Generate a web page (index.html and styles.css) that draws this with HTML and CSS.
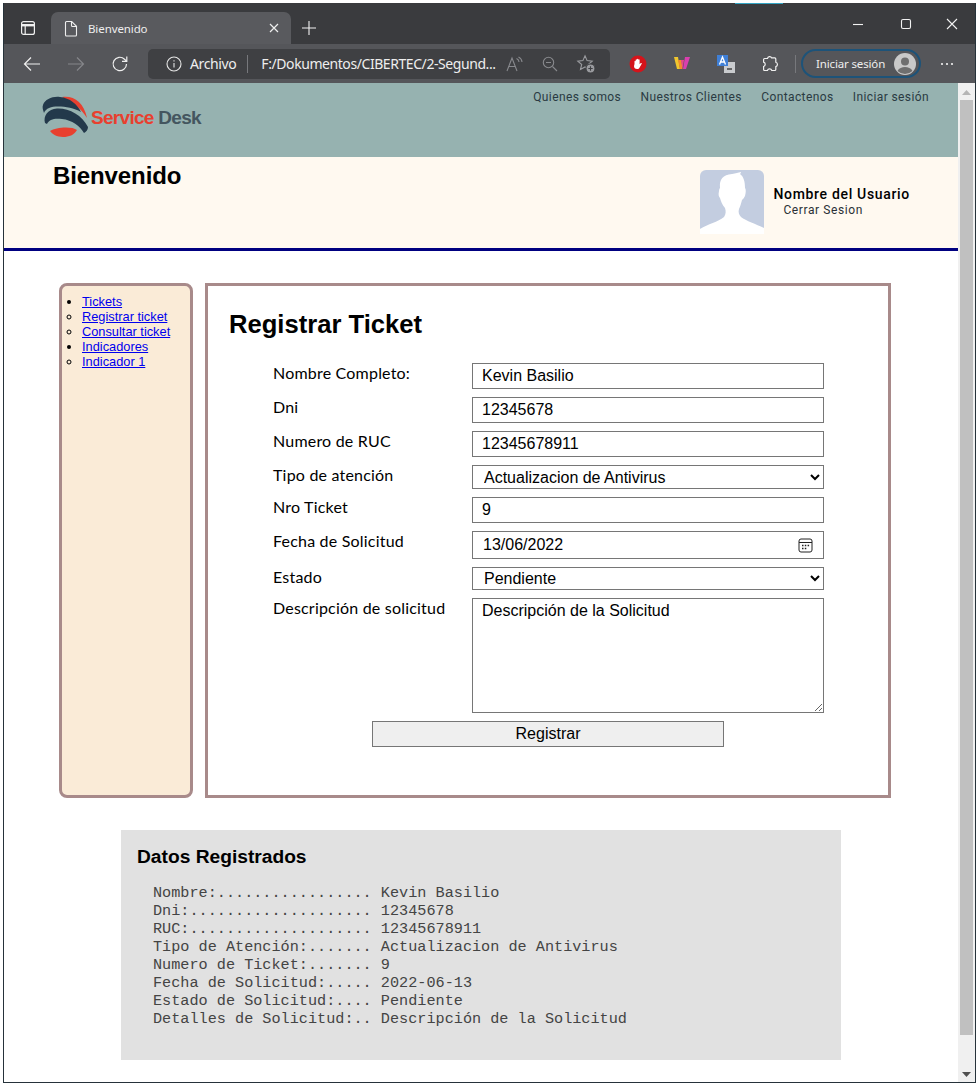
FILE: index.html
```html
<!DOCTYPE html>
<html lang="es">
<head>
<meta charset="utf-8">
<title>Bienvenido</title>
<link rel="stylesheet" href="styles.css">
</head>
<body>
<div class="window">
  <span class="accent"></span>
  <div class="titlebar">
    <span class="tb-icon">
      <svg width="16" height="16" viewBox="0 0 16 16" fill="none" stroke="#f0f0f0" stroke-width="1.2"><rect x="1.6" y="1.6" width="12.8" height="12.8" rx="2"/><path d="M1.6 5.2h12.8" stroke-width="2.4"/><path d="M5.2 5v9"/></svg>
    </span>
    <div class="tab">
      <svg class="tab-file" width="14" height="17" viewBox="0 0 14 17" fill="none" stroke="#eee" stroke-width="1.1"><path d="M1.5 2.5a1 1 0 0 1 1-1h5.2l4.8 4.8v8.7a1 1 0 0 1-1 1h-9a1 1 0 0 1-1-1z"/><path d="M7.5 1.5v4a1 1 0 0 0 1 1h4"/></svg>
      <span class="tab-title">Bienvenido</span>
      <svg class="tab-close" width="10" height="10" viewBox="0 0 10 10" stroke="#eee" stroke-width="1.2"><path d="M1 1l8 8M9 1l-8 8"/></svg>
    </div>
    <span class="tb-plus">
      <svg width="16" height="16" viewBox="0 0 16 16" stroke="#f2f2f2" stroke-width="1.1"><path d="M8 1v14M1 8h14"/></svg>
    </span>
    <div class="winctl">
      <svg width="12" height="12" viewBox="0 0 12 12" stroke="#f2f2f2" stroke-width="1.1"><path d="M1 6.5h10"/></svg>
      <svg class="winctl-max" width="12" height="12" viewBox="0 0 12 12" fill="none" stroke="#f2f2f2" stroke-width="1.1"><rect x="1.5" y="1.5" width="9" height="9" rx="1.5"/></svg>
      <svg width="12" height="12" viewBox="0 0 12 12" stroke="#f2f2f2" stroke-width="1.1"><path d="M1 1l10 10M11 1L1 11"/></svg>
    </div>
  </div>

  <div class="toolbar">
    <span class="tool"><svg width="18" height="16" viewBox="0 0 18 16" fill="none" stroke="#efefef" stroke-width="1.2"><path d="M17 8H1.5M8 1.5L1.5 8 8 14.5"/></svg></span>
    <span class="tool"><svg width="18" height="16" viewBox="0 0 18 16" fill="none" stroke="#85868a" stroke-width="1.2"><path d="M1 8h15.5M10 1.5L16.5 8 10 14.5"/></svg></span>
    <span class="tool"><svg width="18" height="18" viewBox="0 0 18 18" fill="none" stroke="#efefef" stroke-width="1.2"><path d="M15.5 9a6.7 6.7 0 1 1-2-4.8L15.6 6.200"/><path d="M15.8 1.600v4.800H11"/></svg></span>
    <div class="addr">
      <svg class="addr-info" width="16" height="16" viewBox="0 0 16 16" fill="none" stroke="#e6e6e6" stroke-width="1.100"><circle cx="8" cy="8" r="7"/><path d="M8 7v4.500M8 4.300v1.200"/></svg>
      <span class="addr-scheme">Archivo</span>
      <span class="addr-sep"></span>
      <span class="addr-url">F:/Dokumentos/CIBERTEC/2-Segund...</span>
      <svg class="addr-ico-a" width="18" height="16" viewBox="0 0 18 16" fill="none" stroke="#88898d" stroke-width="1.100"><path d="M1 15L6 2l5 13M2.800 10.500h6.500"/><path d="M10.500 2.500a4 4 0 0 1 2.500 3.500M12.500 1a6 6 0 0 1 3.500 5"/></svg>
      <svg class="addr-ico-z" width="16" height="16" viewBox="0 0 16 16" fill="none" stroke="#88898d" stroke-width="1.100"><circle cx="6.500" cy="6.500" r="5.200"/><path d="M4 6.500h5M10.500 10.500L15 15"/></svg>
      <svg class="addr-ico-f" width="20" height="20" viewBox="0 0 20 20" fill="none" stroke="#9a9b9f" stroke-width="1.100"><path d="M9 1.800l2.100 4.800 5.100.5-3.900 3.400 1.200 5-4.500-2.600-4.500 2.600 1.200-5-3.900-3.400 5.100-.5z"/><circle cx="14.500" cy="14.500" r="4.500" fill="#9a9b9f" stroke="#3f4043"/><path d="M14.500 12.300v4.400M12.300 14.500h4.400" stroke="#3f4043"/></svg>
    </div>
    <div class="exts">
      <span class="ext"><svg width="18" height="18" viewBox="0 0 18 18"><circle cx="9" cy="9" r="8.500" fill="#d4141b"/><path d="M5.500 9V6.500c0-1 1.200-1 1.200 0V5c0-1 1.300-1 1.300 0v-.5c0-1 1.300-1 1.300 0V5c0-.9 1.300-.9 1.300 0v4.300l1-1c.7-.6 1.500 0 1 .8l-2 3.400c-.6 1-1.200 1.500-2.500 1.500-2 0-3.100-1.300-3.100-3z" fill="#fff"/></svg></span>
      <span class="ext"><svg width="18" height="16" viewBox="0 0 18 16"><path d="M1 2h4l2 12H4z" fill="#f0c62e"/><path d="M5 5h3.500l1 9H7z" fill="#f28a2e"/><path d="M8 5h3l-1.500 9z" fill="#e8458c"/><path d="M12 2h5l-4 12h-3z" fill="#d93fae"/></svg></span>
      <span class="ext"><svg width="18" height="18" viewBox="0 0 18 18"><rect x="7" y="7" width="11" height="11" fill="#c9cbce"/><path d="M10 14h5" stroke="#666" stroke-width="2"/><rect x="0" y="0" width="11" height="11" fill="#3f7fd6"/><path d="M2.500 9.500L5.500 2l3 7.500M3.700 7h3.600" fill="none" stroke="#fff" stroke-width="1.300"/></svg></span>
      <span class="ext"><svg width="18" height="18" viewBox="0 0 18 18" fill="none" stroke="#f0f0f0" stroke-width="1.200"><path d="M6.500 3.500a2.200 2.200 0 0 1 4.200-.6h3.100a1 1 0 0 1 1 1v3.300a2.300 2.300 0 0 1 0 4.400v2.900a1 1 0 0 1-1 1h-3a2.300 2.300 0 0 0-4.400 0H3.600a1 1 0 0 1-1-1v-3a2.300 2.300 0 0 0 0-4.400v-2.600a1 1 0 0 1 1-1z"/></svg></span>
    </div>
    <span class="tool-sep"></span>
    <div class="signin">
      <span class="signin-text">Iniciar sesión</span>
      <svg width="22" height="22" viewBox="0 0 22 22"><circle cx="11" cy="11" r="11" fill="#c9c9c9"/><circle cx="11" cy="8.500" r="4" fill="#6f6f6f"/><path d="M3.500 18c1.500-3 4.500-4 7.500-4s6 1 7.500 4a11 11 0 0 1-15 0z" fill="#6f6f6f"/></svg>
    </div>
    <svg class="more" width="14" height="4" viewBox="0 0 14 4" fill="#f0f0f0"><circle cx="2" cy="2" r="1.100"/><circle cx="7" cy="2" r="1.100"/><circle cx="12" cy="2" r="1.100"/></svg>
  </div>

  <div class="viewport">
    <div class="page">
      <header class="site-head">
        <a class="logo">
          <svg width="46" height="42" viewBox="0 0 46 42">
            <path d="M20 1C31-1 42 6 45 22 39 12 30 6 20 1z" fill="#e8402f"/>
            <path d="M1 9C3 3 11 0 18 1 28 2 35 8 39 16 32 12 24 10.500 16 10.500 9 10.500 4 12 2 17 1 14 0 11 1 9z" fill="#23394b"/>
            <path d="M3 27C1 20 6 13 15 12.500 27 12 40 19 46 31 46 34 44 36 42 37 38 30 30 24 20 23 13 22 7 23 5 28z" fill="#23394b"/>
            <path d="M8 35C14 31 30 30 35 34 32 39 27 41 21 41 15 41 10 38 8 35z" fill="#e8402f"/>
          </svg>
          <span class="logo-text"><span class="logo-red">Service</span> <span class="logo-dark">Desk</span></span>
        </a>
        <nav class="site-nav">
          <a>Quienes somos</a>
          <a>Nuestros Clientes</a>
          <a>Contactenos</a>
          <a>Iniciar sesión</a>
        </nav>
      </header>

      <section class="welcome">
        <h2 class="welcome-title">Bienvenido</h2>
        <div class="user">
          <svg class="avatar" width="64" height="64" viewBox="0 0 64 64">
            <rect width="64" height="64" rx="6" fill="#c3cde0"/>
            <path d="M0 59C8 54 18 52 24 47 26 44 26 41 25 38 22 35 21 31 20 28 19 27 18 25 19 21 19 19 20 18 20 18 19 9 23 5 32 4 36 3 38 3 41 2 41 3 40 4 40 4 44 7 45 12 45 18 46 19 46 22 45 26 44 28 43 29 42 30 41 34 40 37 39 39 38 42 39 45 41 47 46 51 56 54 64 58V64H0z" fill="#fff"/>
          </svg>
          <div class="user-info">
            <div class="user-name">Nombre del Usuario</div>
            <div class="user-logout">Cerrar Sesion</div>
          </div>
        </div>
      </section>

      <div class="columns">
        <aside class="sidebar">
          <ul class="menu">
            <li class="disc"><a href="#">Tickets</a></li>
            <li class="circle"><a href="#">Registrar ticket</a></li>
            <li class="circle"><a href="#">Consultar ticket</a></li>
            <li class="disc"><a href="#">Indicadores</a></li>
            <li class="circle"><a href="#">Indicador 1</a></li>
          </ul>
        </aside>
        <main class="main">
          <h1 class="main-title">Registrar Ticket</h1>
          <form class="form">
            <label class="lbl">Nombre Completo:</label>
            <input class="field" type="text" value="Kevin Basilio">
            <label class="lbl">Dni</label>
            <input class="field" type="text" value="12345678">
            <label class="lbl">Numero de RUC</label>
            <input class="field" type="text" value="12345678911">
            <label class="lbl">Tipo de atención</label>
            <select class="field sel"><option>Actualizacion de Antivirus</option></select>
            <label class="lbl">Nro Ticket</label>
            <input class="field" type="text" value="9">
            <label class="lbl">Fecha de Solicitud</label>
            <div class="field date">
              <input class="date-input" type="text" value="13/06/2022">
              <svg width="15" height="15" viewBox="0 0 15 15" fill="none" stroke="#222" stroke-width="1"><rect x="1" y="1" width="13" height="13" rx="2"/><path d="M1 4.500h13"/><path d="M4 7.500h1.500M6.800 7.500h1.500M9.600 7.500h1.500M4 10.500h1.500M6.800 10.500h1.500" stroke-width="1.300"/></svg>
            </div>
            <label class="lbl">Estado</label>
            <select class="field sel sel-b"><option>Pendiente</option></select>
            <label class="lbl">Descripción de solicitud</label>
            <textarea class="field area">Descripción de la Solicitud</textarea>
            <button class="btn" type="button">Registrar</button>
          </form>
        </main>
      </div>

      <section class="data">
        <h3 class="data-title">Datos Registrados</h3>
        <pre class="data-pre">Nombre:................. Kevin Basilio
Dni:.................... 12345678
RUC:.................... 12345678911
Tipo de Atención:....... Actualizacion de Antivirus
Numero de Ticket:....... 9
Fecha de Solicitud:..... 2022-06-13
Estado de Solicitud:.... Pendiente
Detalles de Solicitud:.. Descripción de la Solicitud</pre>
      </section>
    </div>
    <div class="scrollbar">
      <svg class="sb-arrow" width="9" height="5" viewBox="0 0 9 5" fill="#b5b5b5"><path d="M4.500 0L9 5H0z"/></svg>
      <div class="sb-thumb"></div>
      <svg class="sb-arrow" width="9" height="5" viewBox="0 0 9 5" fill="#505050"><path d="M0 0h9L4.500 5z"/></svg>
    </div>
  </div>
</div>
</body>
</html>
```

FILE: styles.css
```css
* { box-sizing: border-box; }
html, body { margin: 0; padding: 0; height: 100%; background: #fff; }
body { padding: 3px; overflow: hidden; }

.window {
  position: relative;
  width: 973px;
  height: 1080px;
  border: 1px solid #26323a;
  border-top: 0;
  display: flex;
  flex-direction: column;
  overflow: hidden;
  background: #fff;
}
.accent {
  position: absolute;
  left: 731px;
  top: 0;
  width: 48px;
  height: 1px;
  background: #33a5c4;
}

.titlebar {
  height: 41px;
  background: #3a3b3e;
  display: flex;
  align-items: flex-end;
  flex: none;
  font-family: "Noto Sans", sans-serif;
  color: #eee;
}
.tb-icon { width: 47px; height: 32px; display: flex; align-items: center; justify-content: center; padding-left: 1px; }
.tab {
  width: 240px;
  height: 32px;
  background: #595a5e;
  border-radius: 7px 7px 0 0;
  display: flex;
  align-items: center;
  padding: 0 12px 0 13px;
}
.tab-title { font-size: 11.5px; letter-spacing: -.1px; margin-left: 10px; flex: 1; }
.tb-plus { width: 36px; height: 32px; display: flex; align-items: center; justify-content: center; }
.winctl {
  margin-left: auto;
  align-self: stretch;
  display: flex;
  align-items: center;
  gap: 36px;
  padding: 0 17px 0 0;
  height: 41px;
}
.winctl-max { margin-right: -2px; }

.toolbar {
  height: 39px;
  background: #55565a;
  display: flex;
  align-items: center;
  flex: none;
  padding-left: 6px;
  font-family: "Noto Sans", sans-serif;
  color: #eee;
}
.tool { width: 44px; display: flex; justify-content: center; }
.addr {
  width: 462px;
  height: 30px;
  margin-left: 6px;
  background: #3f4043;
  border-radius: 5px;
  display: flex;
  align-items: center;
  padding-left: 18px;
  font-size: 14px;
  white-space: nowrap;
}
.addr-scheme { margin-left: 8px; font-size: 14px; letter-spacing: -.38px; }
.addr-sep { width: 1px; height: 18px; background: #77787c; margin: 0 13px 0 11px; }
.addr-url { width: 240px; font-size: 14px; letter-spacing: -.43px; overflow: hidden; }
.addr-ico-a { margin-left: 5px; }
.addr-ico-z { margin-left: 18px; }
.addr-ico-f { margin-left: 18px; }
.exts { display: flex; margin-left: 6px; }
.ext { width: 44px; display: flex; justify-content: center; }
.tool-sep { width: 1px; height: 18px; background: #77787c; margin: 0 5px 0 3px; }
.signin {
  width: 120px;
  height: 29px;
  border: 2px solid #1d5379;
  border-radius: 15px;
  display: flex;
  align-items: center;
  justify-content: space-between;
  padding: 0 3px 0 13px;
  font-size: 11.5px;
  letter-spacing: -.15px;
}
.more { margin-left: 19px; }

.viewport { flex: 1; display: flex; min-height: 0; }
.page { width: 954px; flex: none; overflow: hidden; }

.site-head {
  height: 74px;
  background: #96b2b0;
  display: flex;
  justify-content: space-between;
  padding: 0 29px 0 38px;
}
.logo { display: flex; align-items: flex-start; padding-top: 13px; }
.logo-text {
  font-family: "Liberation Sans", sans-serif;
  font-weight: 700;
  font-size: 19px;
  letter-spacing: -.7px;
  margin: 11px 0 0 3px;
  white-space: pre;
}
.logo-red { color: #e8402f; }
.logo-dark { color: #44565f; }
.site-nav {
  display: flex;
  gap: 19.33px;
  padding-top: 7px;
  font-family: Roboto, sans-serif;
  font-size: 12px;
  letter-spacing: .39px;
  line-height: 14px;
  color: #2a3a42;
}

.welcome {
  height: 94px;
  background: #fff9f0;
  border-bottom: 3px solid #000080;
  display: flex;
  justify-content: space-between;
  padding-left: 49px;
}
.welcome-title {
  margin: 5px 0 0;
  font: 700 24px/28px "Liberation Sans", sans-serif;
  letter-spacing: -.1px;
  color: #000;
}
.user { display: flex; margin: 13px 48px 0 0; }
.avatar { display: block; flex: none; }
.user-info { margin-left: 9px; padding-top: 17px; font-family: Roboto, sans-serif; }
.user-name { font-size: 14px; font-weight: 500; letter-spacing: .68px; line-height: 15px; color: #000; white-space: nowrap; }
.user-logout { font-size: 12px; letter-spacing: .6px; line-height: 15px; color: #2a3036; padding-left: 10px; margin-top: 1px; }

.columns {
  display: flex;
  gap: 12px;
  padding: 32px 0 0 55px;
}
.sidebar {
  width: 134px;
  height: 515px;
  background: #faebd7;
  border: 3px solid #a88a8a;
  border-radius: 8px;
  padding-top: 8px;
}
.menu {
  margin: 0;
  padding: 0 0 0 20px;
  font: 12.8px/15px "Liberation Sans", sans-serif;
}
.disc { list-style-type: disc; }
.circle { list-style-type: circle; }
.menu a { color: #0000ee; text-decoration: underline; }

.main {
  width: 686px;
  height: 515px;
  border: 3px solid #a88a8a;
  padding: 23px 0 0 21px;
}
.main-title {
  margin: 0 0 24px;
  font: 700 25.6px/30px "Liberation Sans", sans-serif;
  color: #000;
}
.form {
  display: grid;
  grid-template-columns: 199px 352px;
  row-gap: 8px;
  margin-left: 44px;
  align-items: start;
}
.lbl {
  font: 16px/20px Lato, sans-serif;
  color: #000;
  letter-spacing: .2px;
}
.field {
  display: block;
  width: 352px;
  height: 26px;
  margin: 0;
  padding: 0 9px;
  border: 1px solid #767676;
  border-radius: 0;
  background: #fff;
  font: 16px "Liberation Sans", sans-serif;
  color: #000;
}
.sel { height: 24px; padding: 0 0 0 7px; }
.sel-b { height: 23px; }
.date {
  height: 28px;
  padding: 0 10px 0 10px;
  display: flex;
  align-items: center;
  justify-content: space-between;
}
.date-input {
  border: 0;
  padding: 0;
  margin: 0;
  width: 200px;
  background: transparent;
  font: 16px "Liberation Sans", sans-serif;
  color: #000;
  outline: 0;
}
.area { height: 115px; padding: 3px 9px; resize: vertical; }
.btn {
  grid-column: 1 / -1;
  width: 352px;
  height: 26px;
  margin-left: 99px;
  padding: 0;
  border: 1px solid #767676;
  border-radius: 0;
  background: #efefef;
  font: 16px "Liberation Sans", sans-serif;
  color: #000;
}

.data {
  width: 720px;
  height: 230px;
  margin: 32px 0 0 117px;
  background: #e1e1e1;
  padding: 16px 16px 0;
}
.data-title {
  margin: 0 0 17px;
  font: 700 19.2px/21px "Liberation Sans", sans-serif;
  color: #000;
}
.data-pre {
  margin: 0 0 0 16px;
  font: 15.2px/18px "Liberation Mono", monospace;
  color: #444;
}

.scrollbar {
  width: 17px;
  flex: none;
  background: #f0f0f0;
  display: flex;
  flex-direction: column;
  align-items: center;
  padding: 7px 0 5px;
}
.sb-thumb { width: 13px; flex: 1; background: #c0c0c0; margin: 5px 0 37px; }
```
